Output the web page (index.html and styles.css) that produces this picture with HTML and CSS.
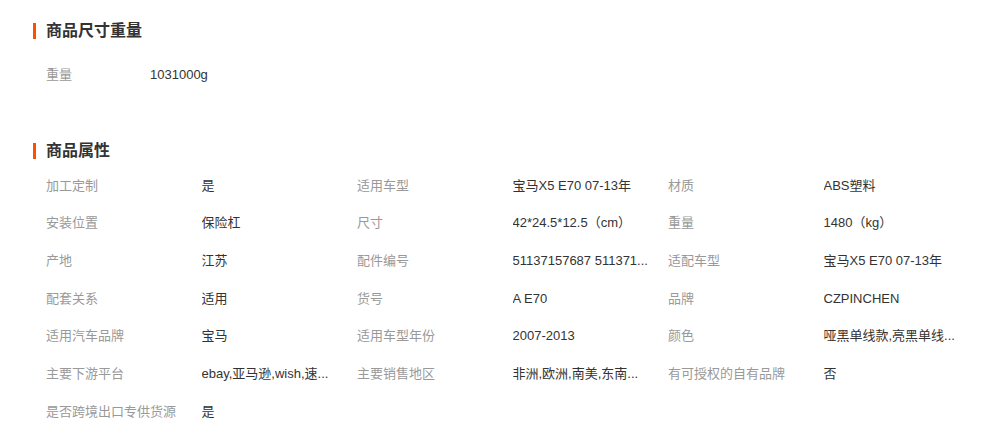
FILE: index.html
```html
<!DOCTYPE html>
<html lang="zh-CN">
<head>
    <meta charset="UTF-8">
    <title>商品详情</title>
    <link rel="stylesheet" href="styles.css">
</head>
<body>
    <div class="detail">
        <div class="section size-section">
            <h2 class="section-title">商品尺寸重量</h2>
            <div class="attr-list size-list">
                <div class="attr-name">重量</div>
                <div class="attr-value">1031000g</div>
            </div>
        </div>

        <div class="section prop-section">
            <h2 class="section-title">商品属性</h2>
            <div class="attr-list prop-list">
                <div class="attr-name">加工定制</div>
                <div class="attr-value">是</div>
                <div class="attr-name">适用车型</div>
                <div class="attr-value">宝马X5 E70 07-13年</div>
                <div class="attr-name">材质</div>
                <div class="attr-value">ABS塑料</div>

                <div class="attr-name">安装位置</div>
                <div class="attr-value">保险杠</div>
                <div class="attr-name">尺寸</div>
                <div class="attr-value">42*24.5*12.5（cm）</div>
                <div class="attr-name">重量</div>
                <div class="attr-value">1480（kg）</div>

                <div class="attr-name">产地</div>
                <div class="attr-value">江苏</div>
                <div class="attr-name">配件编号</div>
                <div class="attr-value">51137157687 511371...</div>
                <div class="attr-name">适配车型</div>
                <div class="attr-value">宝马X5 E70 07-13年</div>

                <div class="attr-name">配套关系</div>
                <div class="attr-value">适用</div>
                <div class="attr-name">货号</div>
                <div class="attr-value">A E70</div>
                <div class="attr-name">品牌</div>
                <div class="attr-value">CZPINCHEN</div>

                <div class="attr-name">适用汽车品牌</div>
                <div class="attr-value">宝马</div>
                <div class="attr-name">适用车型年份</div>
                <div class="attr-value">2007-2013</div>
                <div class="attr-name">颜色</div>
                <div class="attr-value">哑黑单线款,亮黑单线...</div>

                <div class="attr-name">主要下游平台</div>
                <div class="attr-value">ebay,亚马逊,wish,速...</div>
                <div class="attr-name">主要销售地区</div>
                <div class="attr-value">非洲,欧洲,南美,东南...</div>
                <div class="attr-name">有可授权的自有品牌</div>
                <div class="attr-value">否</div>

                <div class="attr-name">是否跨境出口专供货源</div>
                <div class="attr-value">是</div>
            </div>
        </div>
    </div>
</body>
</html>
```

FILE: styles.css
```css
body {
    margin: 0;
    background-color: #fff;
    font-family: "Liberation Sans", "Noto Sans CJK SC", sans-serif;
    font-size: 13px;
    color: #333;
}
.detail {
    padding: 20px 15px 0 33px;
}
.section-title {
    margin: 0;
    padding-left: 10px;
    border-left: 3px solid #ff5000;
    font-size: 16px;
    font-weight: bold;
    line-height: 16px;
    height: 16px;
    color: #333;
}
.size-section {
    padding-top: 3px;
}
.size-list {
    margin-top: 17px;
    grid-template-columns: 104px auto;
}
.prop-section {
    margin-top: 49px;
}
.prop-list {
    margin-top: 8px;
    grid-template-columns: repeat(6, 155.5px);
}
.attr-list {
    display: grid;
    padding-left: 13px;
}
.attr-name,
.attr-value {
    height: 37.7px;
    line-height: 37.7px;
    white-space: nowrap;
    overflow: hidden;
    text-overflow: ellipsis;
}
.attr-name {
    color: #999;
}
.attr-value {
    color: #333;
    padding-right: 12px;
}
```
